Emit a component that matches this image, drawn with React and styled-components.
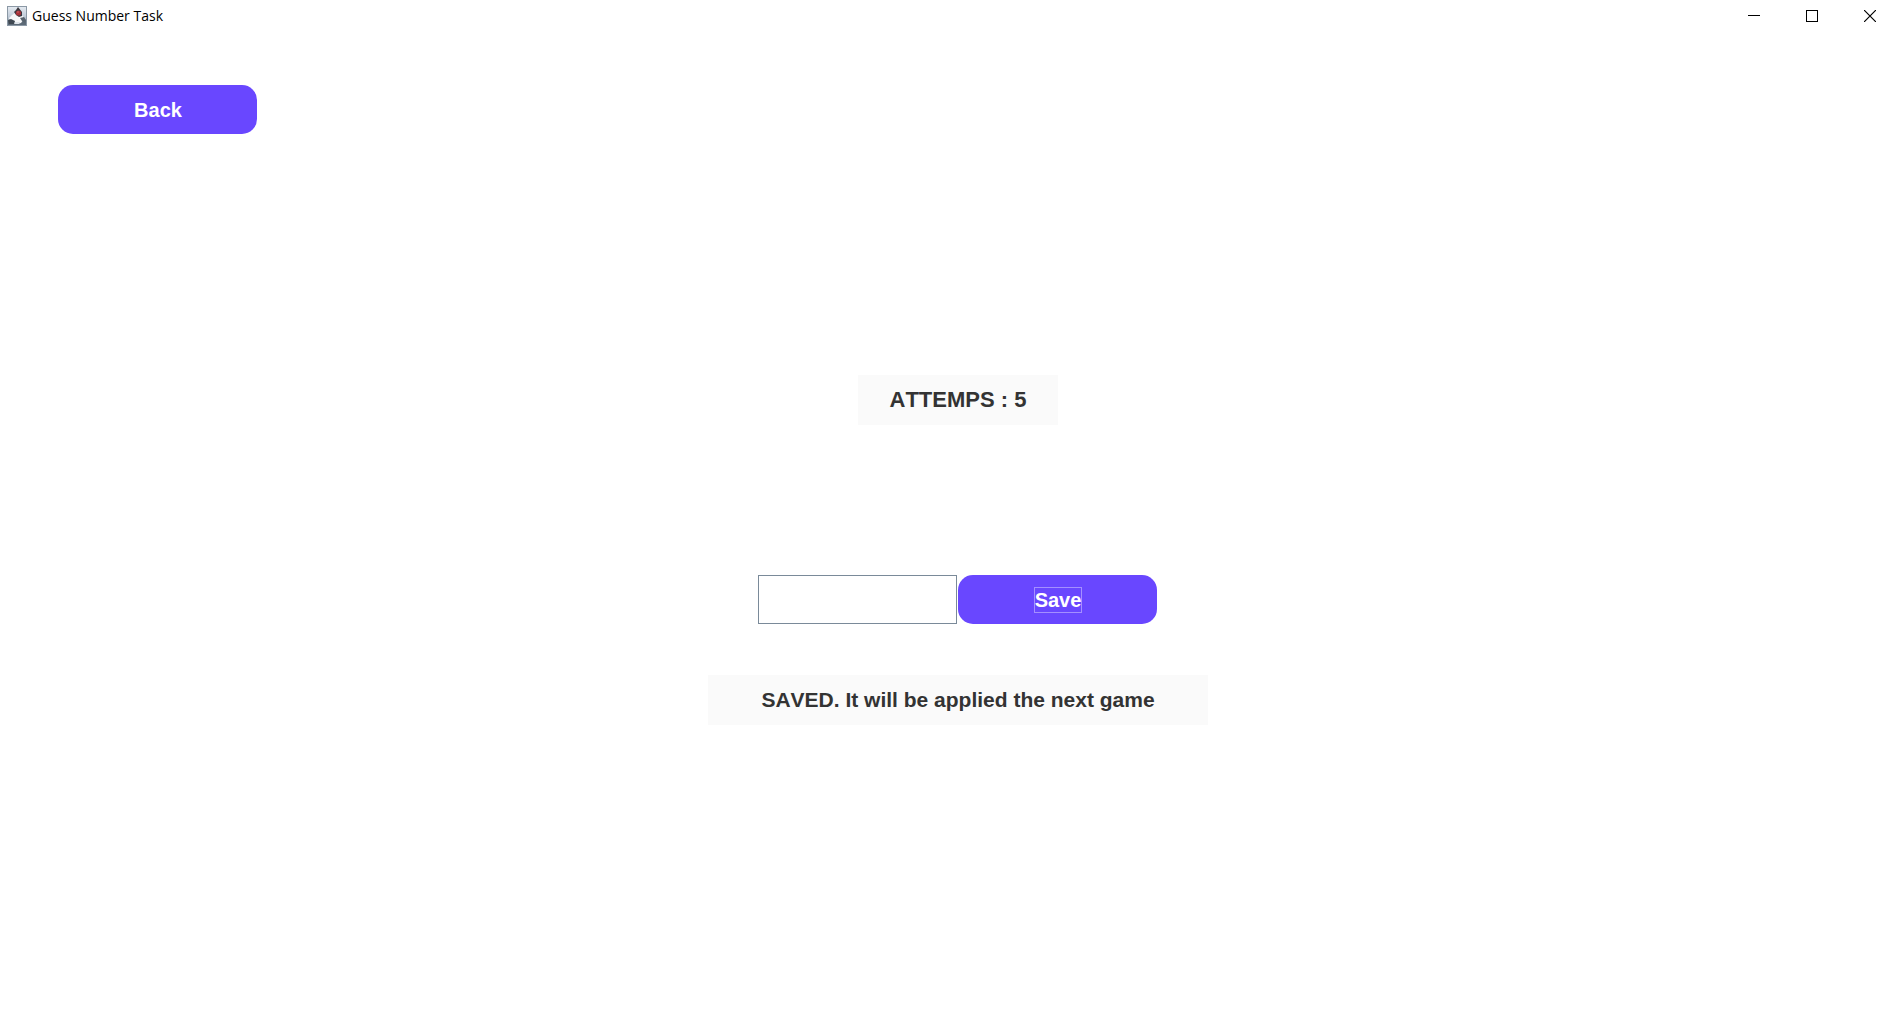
import React, { useState } from "react";
import styled, { createGlobalStyle } from "styled-components";

const GlobalStyle = createGlobalStyle`
  * {
    box-sizing: border-box;
  }
  body {
    margin: 0;
    background: #ffffff;
    font-family: "Liberation Sans", Arial, sans-serif;
  }
`;

const Window = styled.div`
  display: flex;
  flex-direction: column;
  min-height: 100vh;
`;

const TitleBar = styled.header`
  display: flex;
  align-items: center;
  height: 32px;
  padding-left: 7px;
`;

const Title = styled.h1`
  flex: 1;
  margin: 0 0 0 5px;
  font: 400 14px/20px "Open Sans", "Segoe UI", sans-serif;
  color: #000000;
`;

const WindowControls = styled.div`
  display: flex;
  gap: 12px;
`;

const WindowButton = styled.button`
  display: flex;
  align-items: center;
  justify-content: center;
  width: 46px;
  height: 32px;
  padding: 0;
  border: 0;
  background: transparent;
`;

const Content = styled.main`
  display: flex;
  flex-direction: column;
  padding: 53px 58px 0;
`;

const Button = styled.button`
  display: flex;
  align-items: center;
  justify-content: center;
  width: 199px;
  height: 49px;
  padding: 0 0 0 1px;
  border: 0;
  border-radius: 15px;
  background: #6947ff;
  color: #ffffff;
  font: 700 20px/24px "Liberation Sans", Arial, sans-serif;
`;

const FocusLabel = styled.span`
  border: 1px solid #a48fff;
`;

const Settings = styled.form`
  display: flex;
  flex-direction: column;
  align-items: center;
  margin-top: 241px;
  padding-left: 23px;
`;

const Message = styled.output`
  display: flex;
  align-items: center;
  justify-content: center;
  width: ${({ $wide }) => ($wide ? "500px" : "200px")};
  height: 50px;
  background: #fafafa;
  color: #333333;
  font-size: ${({ $wide }) => ($wide ? "21px" : "22px")};
  font-weight: 700;
  line-height: 26px;
  font-kerning: none;
`;

const Fields = styled.div`
  display: flex;
  gap: 1px;
  width: 400px;
  margin: 150px 0 51px;
`;

const NumberInput = styled.input`
  width: 199px;
  height: 49px;
  padding: 0 8px;
  border: 1px solid #7a8a99;
  border-radius: 0;
  outline: 0;
  background: #ffffff;
  font: 400 20px/24px "Liberation Sans", Arial, sans-serif;
`;

function JavaIcon() {
  return (
    <svg width="20" height="20" viewBox="0 0 20 20" aria-hidden="true">
      <defs>
        <linearGradient id="tile" x1="0" y1="0" x2="0" y2="1">
          <stop offset="0" stopColor="#e6ebf1" />
          <stop offset="0.5" stopColor="#c3cedb" />
          <stop offset="1" stopColor="#8796a5" />
        </linearGradient>
      </defs>
      <rect x="0.5" y="0.5" width="19" height="19" fill="url(#tile)" stroke="#8b98a5" />
      <path d="M1 15L4 12L8 13L14 13L19 14V19H1Z" fill="#5d6a77" />
      <path d="M2 12L5 9L8 7L13 9L16 10L17 13L14 17L10 18L6 16L3 15Z" fill="#f6f7f9" />
      <path d="M11 1L15 6L15 10L12 11L9 9L7 6L9 4Z" fill="#3c3a41" />
      <path d="M1 14L4 13L8 15L7 18L2 18Z" fill="#3f4852" />
      <path d="M13 12L17 11L19 14L18 17L15 15Z" fill="#59646f" />
      <path d="M8 16H13L12 18H7Z" fill="#dde3e9" />
      <circle cx="11.5" cy="7" r="2.6" fill="#a8323a" />
      <circle cx="11" cy="6" r="0.8" fill="#cf6b6d" />
    </svg>
  );
}

function WindowIcon({ d, crisp }) {
  return (
    <svg
      width="12"
      height="12"
      viewBox="0 0 12 12"
      shapeRendering={crisp ? "crispEdges" : "auto"}
      aria-hidden="true"
    >
      <path d={d} fill="none" stroke="#000000" strokeWidth={crisp ? 1 : 1.2} />
    </svg>
  );
}

export default function App() {
  const [value, setValue] = useState("");
  const [attempts, setAttempts] = useState(5);

  const save = (event) => {
    event.preventDefault();
    if (Number(value) > 0) setAttempts(Number(value));
    setValue("");
  };

  return (
    <Window>
      <GlobalStyle />
      <TitleBar>
        <JavaIcon />
        <Title>Guess Number Task</Title>
        <WindowControls>
          <WindowButton type="button" aria-label="Minimize">
            <WindowIcon crisp d="M0 5.5H12" />
          </WindowButton>
          <WindowButton type="button" aria-label="Maximize">
            <WindowIcon crisp d="M0.5 0.5H11.5V11.5H0.5Z" />
          </WindowButton>
          <WindowButton type="button" aria-label="Close">
            <WindowIcon d="M0 0L12 12M12 0L0 12" />
          </WindowButton>
        </WindowControls>
      </TitleBar>
      <Content>
        <Button type="button">Back</Button>
        <Settings onSubmit={save}>
          <Message>ATTEMPS : {attempts}</Message>
          <Fields>
            <NumberInput
              aria-label="Number of attempts"
              inputMode="numeric"
              value={value}
              onChange={(event) => setValue(event.target.value)}
            />
            <Button type="submit">
              <FocusLabel>Save</FocusLabel>
            </Button>
          </Fields>
          <Message $wide>SAVED. It will be applied the next game</Message>
        </Settings>
      </Content>
    </Window>
  );
}
